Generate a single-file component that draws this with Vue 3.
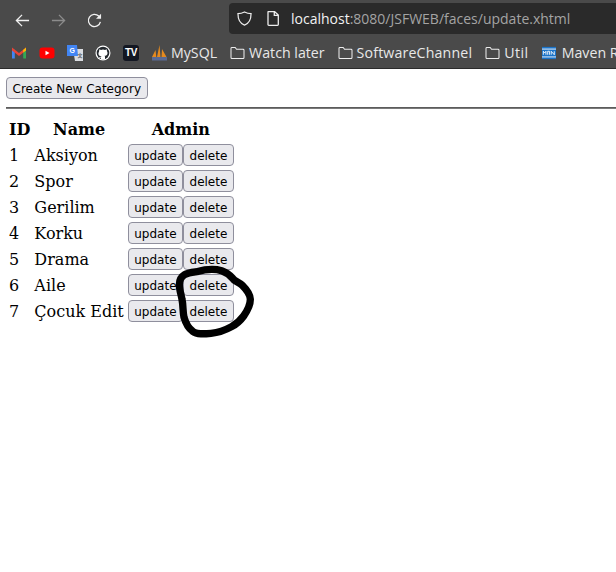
<script setup>
const categories = [
  { id: 1, name: "Aksiyon" },
  { id: 2, name: "Spor" },
  { id: 3, name: "Gerilim" },
  { id: 4, name: "Korku" },
  { id: 5, name: "Drama" },
  { id: 6, name: "Aile" },
  { id: 7, name: "Çocuk Edit" },
];
</script>

<template>
  <div class="browser">
    <div class="toolbar">
      <div class="nav">
        <svg class="nav-icon" viewBox="0 0 16 16"><path d="M15 8H1.500M7.500 2 1.500 8l6 6" /></svg>
        <svg class="nav-icon off" viewBox="0 0 16 16"><path d="M1 8h13.500M8.500 2l6 6-6 6" /></svg>
        <svg class="nav-icon" viewBox="0 0 16 16"><path d="M14.300 9.500A6.500 6.500 0 1 1 12.500 3.300L14 4.800" /><path class="fill" d="M15 .8v5.400H9.600z" /></svg>
      </div>
      <div class="urlbar">
        <svg class="url-icon" viewBox="0 0 16 16"><path d="M8 1c2 1 4.300 1.700 7 1.700C15 8 14 13 8 15 2 13 1 8 1 2.700 3.700 2.700 6 2 8 1z" /></svg>
        <svg class="url-icon page-icon" viewBox="0 0 12 15"><path d="M1 1q0-.5.500-.5h6L11.300 4v9.500q0 .8-.8.800H1.800q-.8 0-.8-.8zM7.300.8V4.300h3.800" /></svg>
        <span class="url"><span class="host">localhost</span>:8080/JSFWEB/faces/update.xhtml</span>
      </div>
    </div>
    <div class="bookmarks">
      <svg class="fav" viewBox="0 0 16 16">
        <path fill="#4285f4" d="M1 3.500 3.800 5v8.500H1z" />
        <path fill="#34a853" d="M15 3.500 12.200 5v8.500H15z" />
        <path fill="#ea4335" d="M1 2.500 8 8l7-5.500V5.500L8 11 1 5.500z" />
        <path fill="#fbbc04" d="M12.200 5 15 2.500v3l-2.800 2z" />
      </svg>
      <svg class="fav" viewBox="0 0 16 16">
        <rect x="0.500" y="2.500" width="15" height="11" rx="3" fill="#f00" />
        <path fill="#fff" d="m6.500 5.700 4 2.300-4 2.300z" />
      </svg>
      <svg class="fav" viewBox="0 0 16 16">
        <path fill="#dadce0" d="M6 4h10v12H8z" />
        <path fill="#4285f4" d="M0 0h10l1 11H0z" />
        <text x="2.600" y="7.600" class="fav-text">G</text>
        <text x="10.500" y="12" class="fav-text dark">文</text>
      </svg>
      <svg class="fav" viewBox="0 0 16 16">
        <circle cx="8" cy="8" r="7.500" fill="#fff" />
        <circle cx="8" cy="8" r="6.300" fill="#24292e" />
        <path fill="#fff" d="M4.300 4.200 6 5a5.500 5.500 0 0 1 4 0l1.700-.8.300 2c.6.800.7 2.300.2 3.200-.5.800-1.400 1.200-2.700 1.300.4.300.5.800.5 1.300v2.300H6v-1.200c-1.200.2-1.800-.2-2.300-1.300.5.200 1.200.8 2.300.5 0-.5.100-.8.500-1.100-1.300-.1-2.200-.5-2.700-1.300-.5-.9-.4-2.400.2-3.200z" />
      </svg>
      <span class="tv"><span class="tv-mark">TV</span></span>
      <span class="bookmark">
        <svg class="fav" viewBox="0 0 16 16">
          <path fill="#e58a1f" d="M1 12 4.500 5l.8 7zM6 12l2.500-12 1 12zM10.500 12l.5-8 4.500 8z" />
          <rect x="1" y="12" width="15" height="3.500" fill="#5a6a94" />
        </svg>
        MySQL
      </span>
      <span class="bookmark">
        <svg class="folder" viewBox="0 0 16 14"><path d="M1 12.500V2.500q0-1 1-1h3.500l1.500 2h7q1 0 1 1v8q0 1-1 1H2q-1 0-1-1z" /></svg>
        Watch later
      </span>
      <span class="bookmark software">
        <svg class="folder" viewBox="0 0 16 14"><path d="M1 12.500V2.500q0-1 1-1h3.500l1.500 2h7q1 0 1 1v8q0 1-1 1H2q-1 0-1-1z" /></svg>
        SoftwareChannel
      </span>
      <span class="bookmark util">
        <svg class="folder" viewBox="0 0 16 14"><path d="M1 12.500V2.500q0-1 1-1h3.500l1.500 2h7q1 0 1 1v8q0 1-1 1H2q-1 0-1-1z" /></svg>
        Util
      </span>
      <span class="bookmark">
        <svg class="fav maven" viewBox="0 0 16 16">
          <rect y="1" width="16" height="14" fill="#1a73c8" />
          <rect y="3" width="16" height="1" fill="#fff" />
          <rect y="12" width="16" height="1" fill="#fff" />
          <path d="M1.500 10V6l1.500 2 1.500-2v4M6.500 10V6h2v4M10.500 10V6l3.500 4V6" stroke="#fff" fill="none" stroke-width="1" />
        </svg>
        Maven R
      </span>
    </div>
  </div>

  <div class="page">
    <button class="btn">Create New Category</button>
    <hr />
    <table>
      <thead>
        <tr>
          <th>ID</th>
          <th>Name</th>
          <th>Admin</th>
        </tr>
      </thead>
      <tbody>
        <tr v-for="c in categories" :key="c.id">
          <td>{{ c.id }}</td>
          <td>{{ c.name }}</td>
          <td class="actions">
            <button class="btn">update</button><button class="btn">delete</button>
          </td>
        </tr>
      </tbody>
    </table>

    <svg class="scribble" viewBox="0 0 450 330">
      <path d="M230 95C255 88 285 86 305 92c15 5 25 14 32 22 6 10 20 12 30 22 12 12 24 26 24 42 0 18-10 36-20 50-10 14-22 24-36 32-18 10-40 18-62 20-20 2-42 4-55-6-14-10-22-28-26-42-4-16-2-36-6-54-3-16-8-30-8-44 0-14 6-24 16-30 10-6 22-7 37-9z" />
    </svg>
  </div>
</template>

<style scoped>
.browser {
  width: 616px;
  height: 69px;
  overflow: hidden;
  background: #4a4a4a;
  border-bottom: 1px solid #2b2b2b;
  box-sizing: border-box;
  font-family: "Open Sans", "Noto Sans", sans-serif;
  color: #e8e8e8;
}

.toolbar {
  display: flex;
  align-items: center;
  height: 37px;
}

.nav {
  display: flex;
  align-items: center;
  gap: 21px;
  width: 229px;
  padding: 3px 0 0 15px;
  box-sizing: border-box;
  flex-shrink: 0;
}

.nav-icon {
  width: 15px;
  height: 15px;
  fill: none;
  stroke: #f0f0f0;
  stroke-width: 1.400;
}

.nav-icon.off {
  opacity: 0.4;
}

.nav-icon .fill {
  fill: #f0f0f0;
  stroke: none;
}

.urlbar {
  display: flex;
  align-items: center;
  height: 31px;
  flex: 1;
  margin-right: -40px;
  padding-left: 8px;
  background: #2a2a2a;
  border-radius: 4px;
  white-space: nowrap;
}

.url-icon {
  width: 15px;
  height: 15px;
  margin-right: 15px;
  fill: none;
  stroke: #ededed;
  stroke-width: 1.300;
  flex-shrink: 0;
}

.page-icon {
  width: 12px;
  margin-right: 12px;
}

.url {
  font-size: 14px;
  color: #a4a4a4;
}

.host {
  color: #f2f2f2;
}

.bookmarks {
  display: flex;
  align-items: center;
  height: 31px;
  padding-left: 11px;
  white-space: nowrap;
  font-size: 14.200px;
}

.fav {
  width: 16px;
  height: 16px;
  flex-shrink: 0;
  margin-right: 12px;
}

.fav-text {
  font-family: "Liberation Sans", sans-serif;
  font-size: 7px;
  font-weight: 700;
  fill: #fff;
}

.fav-text.dark {
  font-family: "Noto Sans CJK SC", sans-serif;
  font-size: 5px;
  fill: #5f6368;
}

.tv {
  display: flex;
  align-items: center;
  justify-content: center;
  flex-shrink: 0;
  width: 16px;
  height: 16px;
  margin-right: 12px;
  background: #131722;
  border-radius: 3px;
}

.tv-mark {
  font-family: "Liberation Sans", sans-serif;
  font-size: 10px;
  font-weight: 700;
  color: #fff;
  letter-spacing: -0.500px;
}

.bookmark {
  display: flex;
  align-items: center;
  flex-shrink: 0;
  margin-right: 13px;
}

.software {
  letter-spacing: 0.150px;
}

.util {
  letter-spacing: 0.500px;
}

.bookmark .fav {
  margin-right: 4px;
}

.bookmark .maven {
  width: 14px;
  margin-right: 6px;
}

.folder {
  width: 15px;
  height: 13px;
  margin-right: 4px;
  fill: none;
  stroke: #ededed;
  stroke-width: 1.100;
  flex-shrink: 0;
}

.page {
  position: relative;
  min-height: 503px;
  padding: 8px 0 0 6px;
  box-sizing: border-box;
  font-family: "DejaVu Serif", serif;
  font-size: 16px;
  color: #000;
}

.btn {
  height: 22px;
  padding: 2px 5.500px 0;
  font-family: "DejaVu Sans", sans-serif;
  font-size: 12px;
  line-height: 1;
  color: #000;
  background: #e9e9ed;
  border: 1px solid #8f8f9d;
  border-radius: 4px;
  box-sizing: border-box;
}

hr {
  margin: 8px 0 0;
  height: 2px;
  border: 0;
  border-top: 1px solid #5c5c5c;
  border-bottom: 1px solid #7a7a7a;
  box-sizing: border-box;
}

table {
  margin-top: 7px;
  border-collapse: separate;
  border-spacing: 2px;
}

th {
  padding: 1px;
  height: 23px;
  box-sizing: border-box;
  text-align: center;
  font-weight: 700;
}

td {
  padding: 1px;
  height: 24px;
  box-sizing: border-box;
}

.actions {
  white-space: nowrap;
  font-size: 0;
}

.scribble {
  position: absolute;
  left: 120px;
  top: 171px;
  width: 150px;
  height: 110px;
  fill: none;
  stroke: #000;
  stroke-width: 22;
  stroke-linecap: round;
  stroke-linejoin: round;
  pointer-events: none;
}
</style>

<style>
body {
  background: #fff;
}
</style>
